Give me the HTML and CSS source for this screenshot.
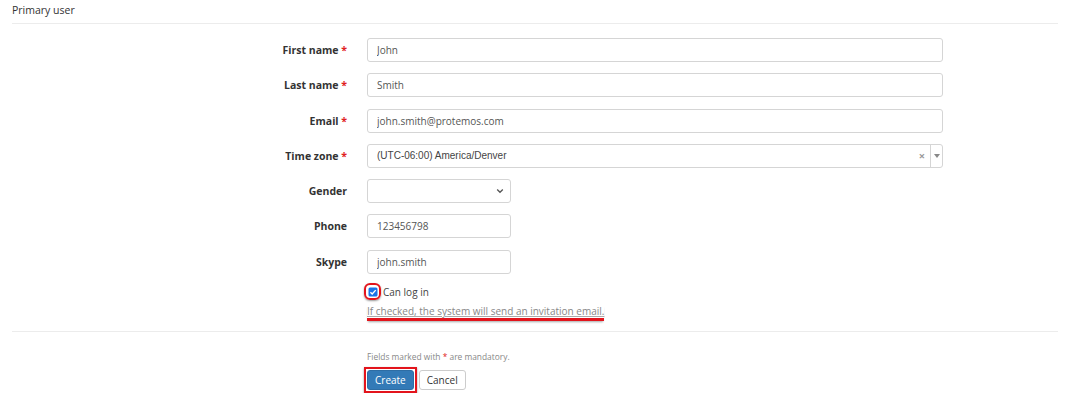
FILE: index.html
```html
<!DOCTYPE html>
<html lang="en">
<head>
    <meta charset="UTF-8">
    <title>Primary user</title>
    <link rel="stylesheet" href="styles.css">
</head>
<body>
    <div class="panel">
        <div class="panel-title">Primary user</div>

        <div class="form">
            <label class="form-label">First name <span class="req">*</span></label>
            <div class="field"><input class="input wide" type="text" value="John"></div>

            <label class="form-label">Last name <span class="req">*</span></label>
            <div class="field"><input class="input wide" type="text" value="Smith"></div>

            <label class="form-label">Email <span class="req">*</span></label>
            <div class="field"><input class="input wide" type="text" value="john.smith@protemos.com"></div>

            <label class="form-label">Time zone <span class="req">*</span></label>
            <div class="field">
                <div class="combo wide">
                    <span class="combo-value">(UTC-06:00) America/Denver</span>
                    <span class="combo-clear">×</span>
                    <span class="combo-arrow"><svg width="6" height="4" viewBox="0 0 6 4"><path d="M0 0h6L3 4z" fill="#888"/></svg></span>
                </div>
            </div>

            <label class="form-label">Gender</label>
            <div class="field">
                <div class="select short">
                    <svg width="8" height="6" viewBox="0 0 8 6"><path d="M1.2 1.5l2.8 2.8 2.8-2.8" fill="none" stroke="#555" stroke-width="1.3"/></svg>
                </div>
            </div>

            <label class="form-label">Phone</label>
            <div class="field"><input class="input short" type="text" value="123456798"></div>

            <label class="form-label">Skype</label>
            <div class="field"><input class="input short" type="text" value="john.smith"></div>

            <div></div>
            <div class="field check-field">
                <div class="check-row">
                    <span class="check-mark">
                        <svg width="10" height="10" viewBox="0 0 10 10"><rect x="0.5" y="0.5" width="9" height="9" rx="1.5" fill="#1a73e8"/><path d="M2.4 5.2l1.8 1.8 3.5-3.9" fill="none" stroke="#fff" stroke-width="1.4"/></svg>
                    </span>
                    <span class="check-text">Can log in</span>
                </div>
                <div class="help">If checked, the system will send an invitation email.</div>
            </div>
        </div>

        <div class="footer">
            <div class="note">Fields marked with <span class="req">*</span> are mandatory.</div>
            <div class="buttons">
                <span class="mark"><button class="btn btn-primary">Create</button></span>
                <button class="btn btn-default">Cancel</button>
            </div>
        </div>
    </div>
</body>
</html>
```

FILE: styles.css
```css
* { margin: 0; padding: 0; box-sizing: border-box; }
body { background: #fff; font-family: "Open Sans", "Liberation Sans", sans-serif; font-size: 10px; color: #333; }
.panel { padding: 0 12px; }
.panel-title { height: 24px; padding-top: 3px; font-size: 10.5px; color: #333; border-bottom: 1px solid #ececec; }
.form { display: grid; grid-template-columns: 335px 576px; column-gap: 20px; row-gap: 11.3px; padding-top: 14px; }
.form-label { text-align: right; font-weight: bold; font-size: 10.5px; line-height: 24px; color: #333; }
.req { color: #e02020; }
.field { height: 24px; }
.input { height: 24px; border: 1px solid #d5d5d5; border-radius: 3px; padding: 0 9px; font-family: "Open Sans", sans-serif; font-size: 10px; color: #555; background: #fff; }
.wide { width: 576px; }
.short { width: 144px; }
.combo { display: flex; align-items: center; height: 24px; border: 1px solid #d5d5d5; border-radius: 3px; background: #fff; }
.combo-value { flex: 1; padding-left: 9px; font-family: "Liberation Sans", Arial, sans-serif; font-size: 10px; color: #444; }
.combo-clear { width: 16px; font-size: 11px; font-weight: bold; color: #999; text-align: center; }
.combo-arrow { width: 12px; height: 22px; border-left: 1px solid #d5d5d5; display: flex; align-items: center; justify-content: center; }
.select { height: 24px; border: 1px solid #d5d5d5; border-radius: 3px; display: flex; align-items: center; justify-content: flex-end; padding-right: 6px; }
.check-field { height: auto; margin-top: -2px; }
.check-row { display: flex; align-items: center; gap: 2px; }
.check-mark { display: flex; align-items: center; justify-content: center; width: 17px; height: 17px; margin-left: -3px; border: 2px solid #e3141c; border-radius: 6px; box-shadow: 0 1px 2px rgba(0,0,0,0.4); }
.check-text { font-size: 10px; color: #444; }
.help { display: inline-block; margin-top: 5px; color: #888; font-size: 10px; line-height: 13px; text-decoration: underline; text-decoration-color: #aaa; border-bottom: 3px solid #e3141c; box-shadow: 0 2px 2px -1px rgba(0,0,0,0.35); }
.footer { margin-top: 10px; border-top: 1px solid #ececec; padding-top: 19px; padding-left: 355px; }
.note { font-size: 8.4px; line-height: 11px; color: #888; }
.buttons { display: flex; align-items: center; gap: 2px; margin-top: 5px; }
.mark { display: inline-flex; padding: 1px; border: 2px solid #e3141c; box-shadow: 0 1px 2px rgba(0,0,0,0.4); margin-left: -3px; }
.btn { height: 20px; padding: 0 7px; font-family: "Open Sans", sans-serif; font-size: 10px; border-radius: 3px; border: 1px solid; }
.btn-primary { background: #337ab7; border-color: #2e6da4; color: #fff; }
.btn-default { background: #fff; border-color: #ccc; color: #333; }
```
